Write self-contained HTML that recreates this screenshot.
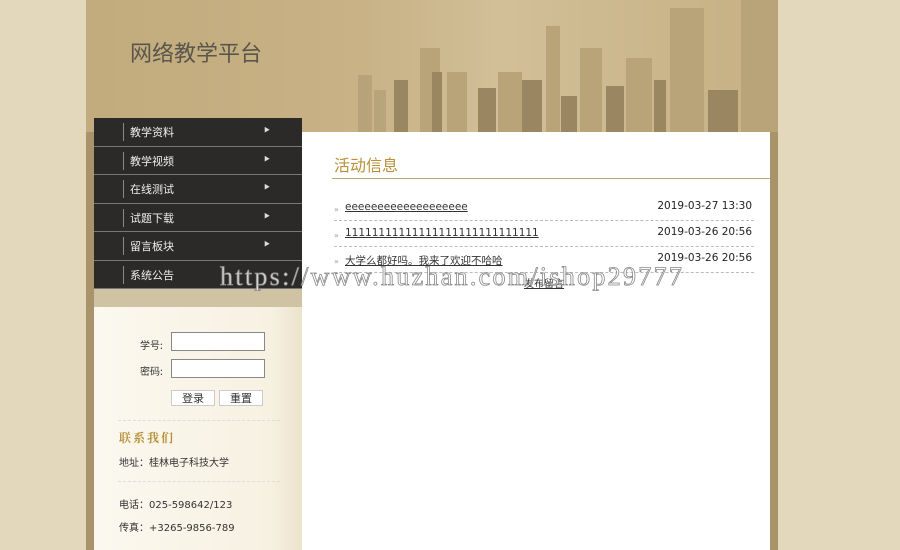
<!DOCTYPE html>
<html><head><meta charset="utf-8"><style>
*{margin:0;padding:0;box-sizing:border-box}
body{width:900px;height:550px;overflow:hidden;background:#e3d8bc;font-family:"DejaVu Sans","Noto Sans CJK SC",sans-serif;font-size:11px;color:#333;position:relative}
#wrap{position:absolute;left:86px;top:0;width:692px;height:550px;background:#a8936a}
#hdr{position:absolute;left:0;top:0;width:692px;height:132px;background:linear-gradient(90deg,#c2ac7d 0%,#c8b286 40%,#d2bf98 60%,#c6b083 100%)}
#hdr h1{position:absolute;left:44px;top:36px;font-size:22px;font-weight:normal;color:#5a564c;font-family:"Noto Sans CJK SC",sans-serif}
#side{position:absolute;left:8px;top:118px;width:208px;height:432px;background:linear-gradient(90deg,#fbf8ef,#f7f1e2 85%,#ece3cc)}
.nav div{height:28.5px;background:#2b2a29;border-bottom:1px solid #777;color:#eee;font-size:11px;line-height:28px;padding-left:36px;position:relative;font-family:"Noto Sans CJK SC",sans-serif}
.nav div:before{content:"";position:absolute;left:29px;top:5px;width:1px;height:18px;background:#888}
.nav div span{position:absolute;left:170px;top:-2px;font-size:6px;color:#ddd}
#bar{height:18px;background:#cfc3a4}
#main{position:absolute;left:216px;top:132px;width:468px;height:418px;background:#fff}
#main h2{position:absolute;left:32px;top:20px;font-size:16px;font-weight:normal;color:#b8913a;font-family:"Noto Sans CJK SC",sans-serif}
#main .ln{position:absolute;left:30px;top:46px;width:438px;height:1px;background:#b9a77a}
.row{position:absolute;left:32px;width:420px;height:26px;border-bottom:1px dashed #bbb;font-size:10.5px}
.row a{position:absolute;left:11px;top:6px;color:#333;text-decoration:underline}
.row i{position:absolute;left:0;top:10px;font-style:normal;color:#99a;font-size:8px}
.row b{position:absolute;right:2px;top:5px;font-weight:normal;color:#222}
label{position:absolute;font-size:10px;color:#333;font-family:"Noto Sans CJK SC",sans-serif}
input{position:absolute;width:94px;height:19px;border:1px solid #888;background:#fff}
.btn{position:absolute;width:44px;height:16px;border:1px solid #ccc;background:#fff;font-size:11px;text-align:center;line-height:14px;font-family:"Noto Sans CJK SC",sans-serif}
.dash{position:absolute;left:24px;width:162px;border-top:1px dashed #ddd}
</style></head><body>
<div id="wrap">
<div id="hdr"><h1>网络教学平台</h1>
<svg style="position:absolute;left:250px;top:0" width="442" height="132" viewBox="0 0 442 132">
<g fill="#a89570" opacity=".5"><rect x="22" y="75" width="14" height="57"/><rect x="38" y="90" width="12" height="42"/></g>
<g fill="#b8a478"><rect x="84" y="48" width="20" height="84"/><rect x="111" y="72" width="20" height="60"/><rect x="162" y="72" width="24" height="60"/><rect x="210" y="26" width="14" height="106"/><rect x="244" y="48" width="22" height="84"/><rect x="290" y="58" width="26" height="74"/><rect x="334" y="8" width="34" height="124"/><rect x="405" y="0" width="37" height="132"/></g>
<g fill="#9a8762"><rect x="58" y="80" width="14" height="52"/><rect x="96" y="72" width="10" height="60"/><rect x="142" y="88" width="18" height="44"/><rect x="186" y="80" width="20" height="52"/><rect x="225" y="96" width="16" height="36"/><rect x="270" y="86" width="18" height="46"/><rect x="318" y="80" width="12" height="52"/><rect x="372" y="90" width="30" height="42"/></g>
</svg></div>
<div id="side">
<div class="nav"><div>教学资料<span>▶</span></div><div>教学视频<span>▶</span></div><div>在线测试<span>▶</span></div><div>试题下载<span>▶</span></div><div>留言板块<span>▶</span></div><div>系统公告</div></div>
<div id="bar"></div>
<label style="left:46px;top:219px">学号:</label><input style="left:77px;top:214px">
<label style="left:46px;top:245px">密码:</label><input style="left:77px;top:241px">
<div class="btn" style="left:77px;top:272px">登录</div><div class="btn" style="left:125px;top:272px">重置</div>
<div class="dash" style="top:302px"></div>
<div style="position:absolute;left:25px;top:311px;color:#b8913a;font-weight:bold;font-size:12px;letter-spacing:2px;font-family:'Noto Serif CJK SC',serif">联系我们</div>
<div style="position:absolute;left:25px;top:336px;font-size:10px">地址：桂林电子科技大学</div>
<div class="dash" style="top:363px"></div>
<div style="position:absolute;left:25px;top:378px;font-size:10px">电话：025-598642/123</div>
<div style="position:absolute;left:25px;top:401px;font-size:10px">传真：+3265-9856-789</div>
</div>
<div id="main"><h2>活动信息</h2><div class="ln"></div>
<div class="row" style="top:63px"><i>»</i><a>eeeeeeeeeeeeeeeeeee</a><b>2019-03-27 13:30</b></div>
<div class="row" style="top:89px"><i>»</i><a>11111111111111111111111111111</a><b>2019-03-26 20:56</b></div>
<div class="row" style="top:115px"><i>»</i><a>大学么都好吗。我来了欢迎不哈哈</a><b>2019-03-26 20:56</b></div>
<div style="position:absolute;left:222px;top:143px;font-size:10px;text-decoration:underline;font-family:'Noto Sans CJK SC',sans-serif">发布留言</div>
</div>
</div>
<div style="position:absolute;left:220px;top:262px;font-family:'Liberation Serif',serif;font-size:26px;color:rgba(255,255,255,.8);letter-spacing:2.3px;-webkit-text-stroke:0.8px #888">https://www.huzhan.com/ishop29777</div>
</body></html>
